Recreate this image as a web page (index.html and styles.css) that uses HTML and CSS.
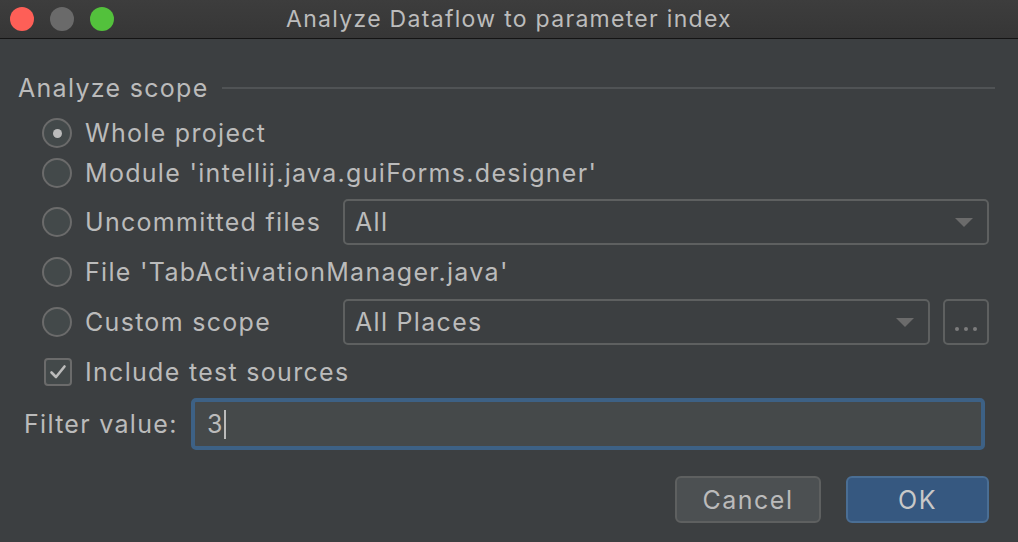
FILE: index.html
```html
<!DOCTYPE html>
<html lang="en">
<head>
  <meta charset="UTF-8">
  <title>Analyze Dataflow to parameter index</title>
  <link rel="stylesheet" href="styles.css">
</head>
<body>
  <div class="window">
    <div class="titlebar">
      <div class="lights">
        <span class="light light-close"></span>
        <span class="light light-min"></span>
        <span class="light light-max"></span>
      </div>
      <div class="title">Analyze Dataflow to parameter index</div>
    </div>

    <div class="content">
      <div class="group-title">
        <span>Analyze scope</span>
        <div class="rule"></div>
      </div>

      <div class="scope">
        <div class="row compact">
          <label class="option"><span class="radio checked"></span>Whole project</label>
        </div>
        <div class="row compact spaced">
          <label class="option"><span class="radio"></span>Module 'intellij.java.guiForms.designer'</label>
        </div>
        <div class="row">
          <label class="option fixed"><span class="radio"></span>Uncommitted files</label>
          <div class="combo">
            <span>All</span>
            <span class="arrow"></span>
          </div>
        </div>
        <div class="row">
          <label class="option"><span class="radio"></span>File 'TabActivationManager.java'</label>
        </div>
        <div class="row">
          <label class="option fixed"><span class="radio"></span>Custom scope</label>
          <div class="combo">
            <span>All Places</span>
            <span class="arrow"></span>
          </div>
          <div class="browse"><span></span><span></span><span></span></div>
        </div>
        <div class="row">
          <label class="option"><span class="checkbox">
            <svg width="20" height="20" viewBox="0 0 20 20"><path d="M3.5 10.5 L8 15 L16.5 4.5" fill="none" stroke="#bbbbbb" stroke-width="2.6" stroke-linecap="round" stroke-linejoin="round"/></svg>
          </span>Include test sources</label>
        </div>
      </div>

      <div class="filter-row">
        <span class="filter-label">Filter value:</span>
        <div class="text-field"><span>3</span><span class="caret"></span></div>
      </div>

      <div class="buttons">
        <button class="button">Cancel</button>
        <button class="button default">OK</button>
      </div>
    </div>
  </div>
</body>
</html>
```

FILE: styles.css
```css
body {
  margin: 0;
  background-color: #3c3f41;
  font-family: Inter, "Liberation Sans", sans-serif;
  color: #bbbbbb;
}

.window {
  width: 1018px;
  height: 542px;
  overflow: hidden;
  background-color: #3c3f41;
}

.titlebar {
  height: 38px;
  display: flex;
  align-items: center;
  position: relative;
  background: linear-gradient(#3d3d3d, #363636);
  border-bottom: 1px solid #141414;
}

.lights {
  display: flex;
  gap: 16px;
  padding-left: 10px;
}

.light {
  width: 24px;
  height: 24px;
  border-radius: 50%;
}

.light-close { background-color: #fe5f57; }
.light-min { background-color: #6a6a6a; }
.light-max { background-color: #53c13c; }

.title {
  position: absolute;
  left: 0;
  right: 0;
  text-align: center;
  font-size: 23px;
  letter-spacing: 1.3px;
  color: #bcbcbc;
}

.content {
  padding-top: 34px;
}

.group-title {
  display: flex;
  align-items: center;
  gap: 13px;
  padding: 0 23px 0 18px;
  font-size: 25px;
  line-height: 30px;
  letter-spacing: 1.3px;
}

.rule {
  flex: 1;
  height: 2px;
  background-color: #505355;
}

.scope {
  margin-top: 10px;
  padding: 0 29px 0 42px;
}

.row {
  height: 50px;
  display: flex;
  align-items: center;
}

.row.compact { height: 40px; }
.row.spaced { margin-bottom: 4px; }

.option {
  display: flex;
  align-items: center;
  font-size: 25px;
  letter-spacing: 1.3px;
  white-space: nowrap;
}

.option.fixed {
  width: 301px;
  flex-shrink: 0;
}

.radio {
  width: 26px;
  height: 26px;
  margin-right: 13px;
  border: 2px solid #6b6b6b;
  border-radius: 50%;
  background-color: #43494a;
  display: flex;
  align-items: center;
  justify-content: center;
}

.radio.checked::after {
  content: "";
  width: 9px;
  height: 9px;
  border-radius: 50%;
  background-color: #bbbbbb;
}

.checkbox {
  width: 24px;
  height: 24px;
  margin: 0 13px 0 2px;
  border: 2px solid #6b6b6b;
  border-radius: 4px;
  background-color: #43494a;
  display: flex;
  align-items: center;
  justify-content: center;
}

.combo {
  flex: 1;
  height: 42px;
  display: flex;
  align-items: center;
  justify-content: space-between;
  padding: 0 14px 0 10px;
  border: 2px solid #5e6060;
  border-radius: 5px;
  font-size: 25px;
  letter-spacing: 1.3px;
}

.arrow {
  width: 0;
  height: 0;
  border-left: 9px solid transparent;
  border-right: 9px solid transparent;
  border-top: 9px solid #6b6b6b;
}

.browse {
  width: 46px;
  height: 46px;
  box-sizing: border-box;
  margin-left: 13px;
  border: 2px solid #5e6060;
  border-radius: 5px;
  display: flex;
  justify-content: center;
  align-items: flex-end;
  gap: 5px;
  padding-bottom: 12px;
}

.browse span {
  width: 4px;
  height: 4px;
  border-radius: 50%;
  background-color: #7c7c7c;
}

.filter-row {
  display: flex;
  align-items: center;
  height: 52px;
  margin-top: 1px;
  padding: 0 33px 0 24px;
}

.filter-label {
  width: 167px;
  flex-shrink: 0;
  font-size: 25px;
  letter-spacing: 1.3px;
}

.text-field {
  flex: 1;
  height: 44px;
  display: flex;
  align-items: center;
  padding-left: 12px;
  border: 4px solid #3d6185;
  border-radius: 5px;
  background-color: #45494a;
  font-size: 25px;
}

.caret {
  width: 2px;
  height: 29px;
  margin-left: 2px;
  background-color: #bbbbbb;
}

.buttons {
  display: flex;
  justify-content: flex-end;
  gap: 25px;
  margin-top: 26px;
  padding-right: 29px;
}

.button {
  height: 47px;
  width: 146px;
  border: 2px solid #5e6060;
  border-radius: 6px;
  background-color: #4c5052;
  color: #bbbbbb;
  font-family: Inter, "Liberation Sans", sans-serif;
  font-size: 25px;
  letter-spacing: 1.5px;
}

.button.default {
  width: 143px;
  background-color: #365880;
  border-color: #4a6e94;
  color: #c8c8c8;
}
```
